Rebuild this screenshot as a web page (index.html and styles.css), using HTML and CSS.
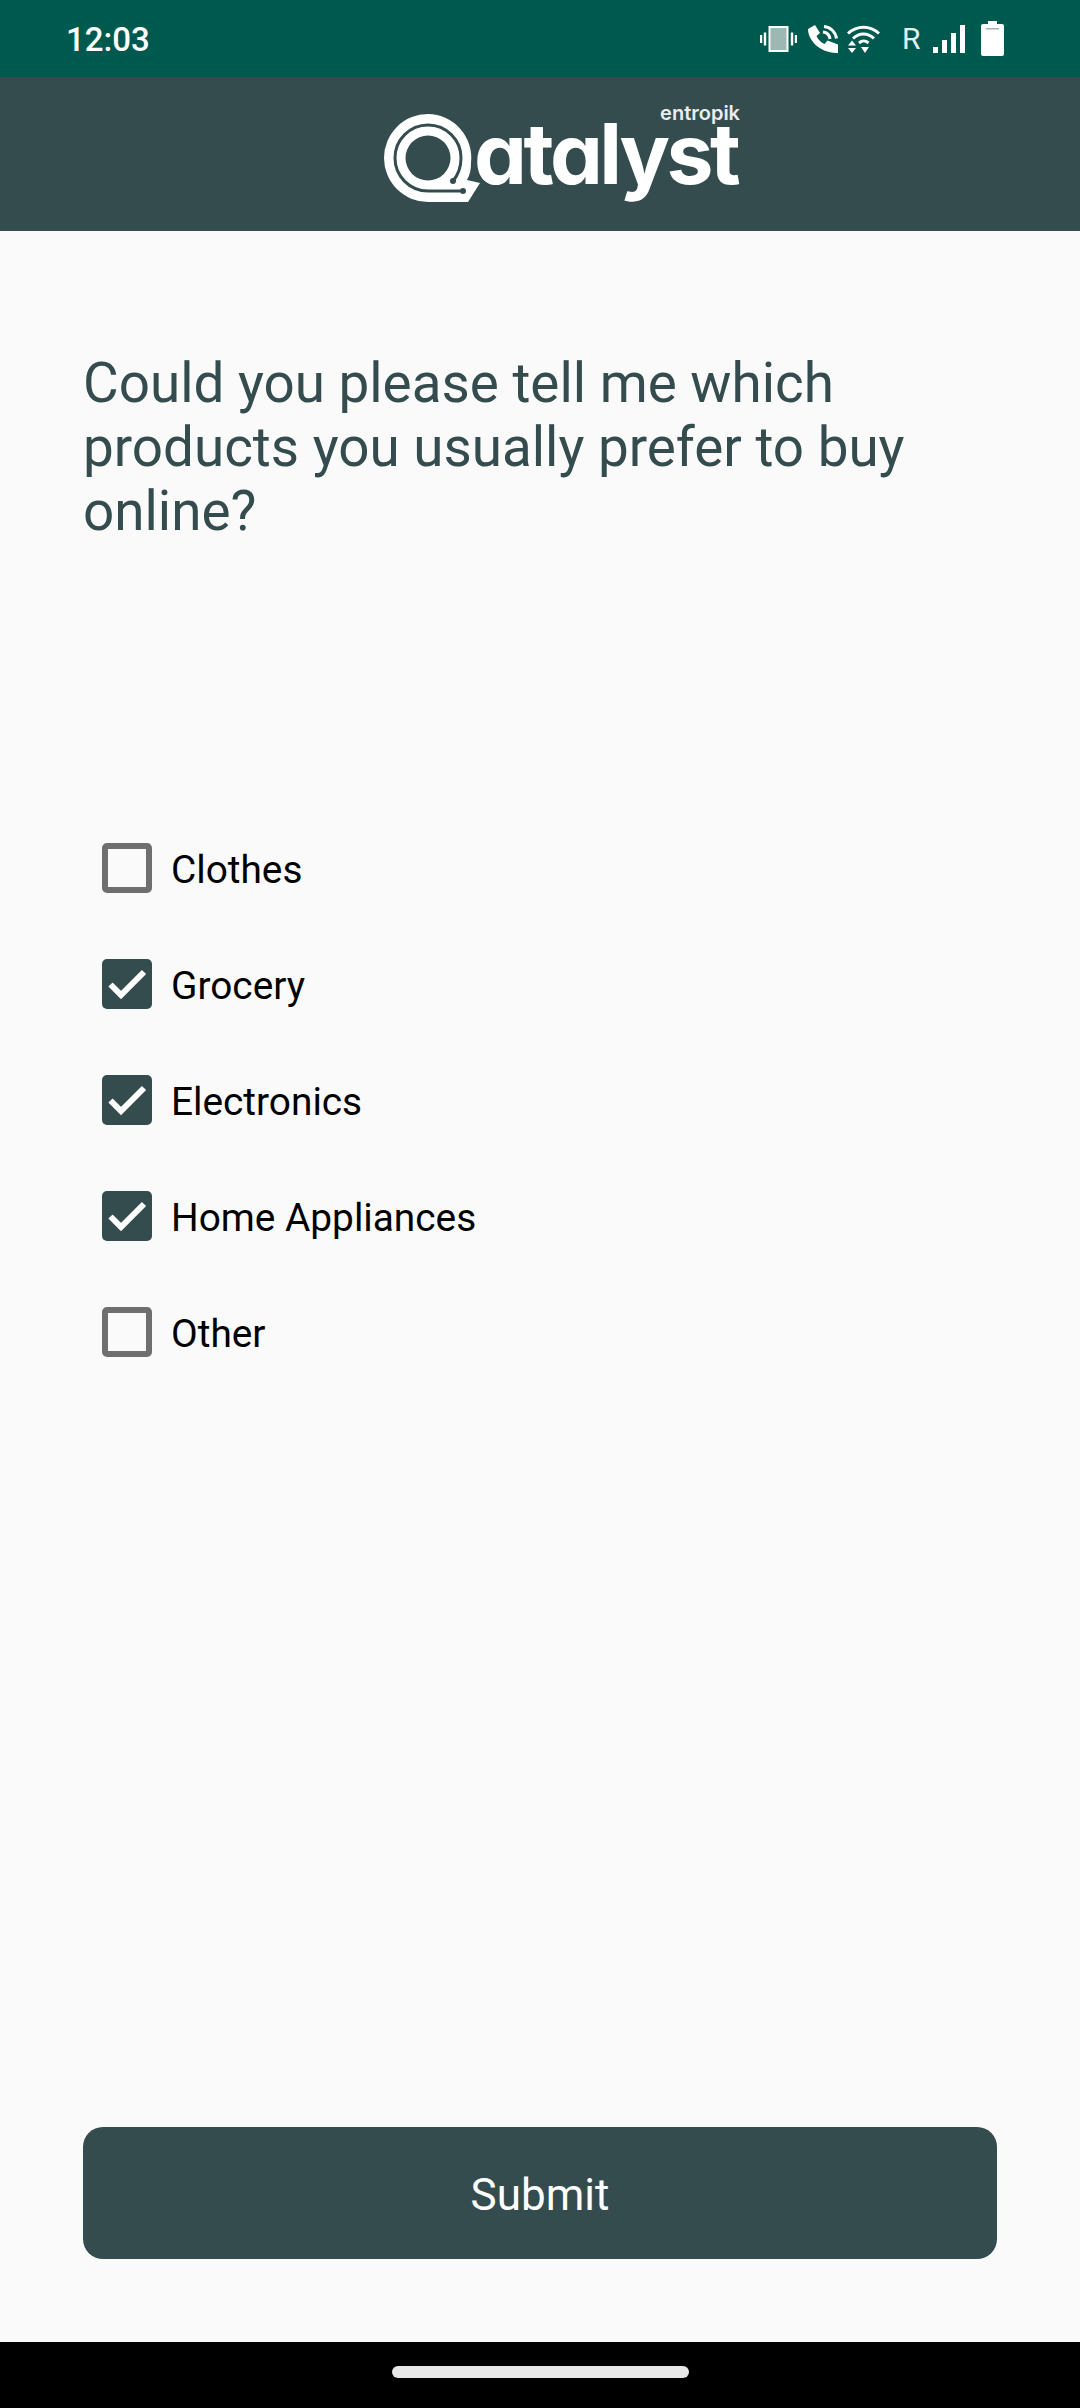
FILE: index.html
```html
<!DOCTYPE html>
<html lang="en">
<head>
<meta charset="utf-8">
<title>Qatalyst survey</title>
<link rel="stylesheet" href="styles.css">
</head>
<body>
<div class="app">
  <div class="status">
    <span class="time">12:03</span>
    <div class="status-icons">
      <svg class="i-vib" viewBox="0 0 37 26"><rect x="9.500" y="1" width="18" height="24" fill="#9db8b2" stroke="#fff" stroke-width="2"/><path d="M1 9v8M5 6.500v13M32 6.500v13M36 9v8" stroke="#fff" stroke-width="2.400" fill="none"/></svg>
      <svg class="i-call" viewBox="0 0 30 28"><path d="M0 4 7 0l5 8-3.500 3c1.500 3.500 4 6 8 8l3-3.500 10.500 4V28C13 28.500 0 16 0 4Z" fill="#fff"/><path d="M15 7c4 .5 6.500 3 7 7M16 1.500c6.500.5 11.500 5.500 12.500 12" stroke="#fff" stroke-width="3" fill="none"/></svg>
      <svg class="i-wifi" viewBox="0 0 33 30"><path d="M1 9.500C10 1 23 1 32 9.500M6 14.500c6.500-6 14.500-6 21 0M12 19c3.500-3 6-3 9.500 0" stroke="#fff" stroke-width="3" fill="none"/><path d="M14 23h8l-4 6ZM1 21.500l4-5 4 5ZM1 24h8l-4 5Z" fill="#fff"/></svg>
      <span class="roam">R</span>
      <svg class="i-sig" viewBox="0 0 32 28"><path d="M0 22h5v6H0ZM9 15h5v13H9ZM18 8h5v20h-5ZM27 0h5v28h-5Z" fill="#fff"/></svg>
      <svg class="i-bat" viewBox="0 0 23 35"><path d="M7 0h9v3h5a2 2 0 0 1 2 2v28a2 2 0 0 1-2 2H2a2 2 0 0 1-2-2V5a2 2 0 0 1 2-2h5Z" fill="#fff"/><rect x="5" y="7" width="13" height="1.500" fill="#9db8b2"/></svg>
    </div>
  </div>
  <header class="brand">
    <div class="logo">
      <svg class="logo-q" viewBox="0 0 98 90">
        <path d="M45 1A44 44 0 0 1 88 50C88 56 87 62 84 67L97 70 85 89H45A44 44 0 0 1 45 1Z" fill="#fff"/>
        <path d="M80 78H45A33 33 0 1 1 78 45C78 55 75 62 70 68" fill="none" stroke="#344c4e" stroke-width="3"/>
        <circle cx="45" cy="45" r="22.500" fill="#344c4e"/>
        <circle cx="80" cy="78" r="3" fill="#344c4e"/>
        <circle cx="70" cy="68" r="3" fill="#344c4e"/>
      </svg>
      <span class="logo-word">atalyst</span>
      <span class="logo-sub">entropik</span>
    </div>
  </header>
  <main class="content">
    <h1 class="question">Could you please tell me which products you usually prefer to buy online?</h1>
    <ul class="options">
      <li class="option"><span class="box"></span><span class="label">Clothes</span></li>
      <li class="option"><span class="box on"><svg viewBox="0 0 50 50"><path d="M8.500 25.500 19 36 42 13" fill="none" stroke="#fff" stroke-width="6"/></svg></span><span class="label">Grocery</span></li>
      <li class="option"><span class="box on"><svg viewBox="0 0 50 50"><path d="M8.500 25.500 19 36 42 13" fill="none" stroke="#fff" stroke-width="6"/></svg></span><span class="label">Electronics</span></li>
      <li class="option"><span class="box on"><svg viewBox="0 0 50 50"><path d="M8.500 25.500 19 36 42 13" fill="none" stroke="#fff" stroke-width="6"/></svg></span><span class="label">Home Appliances</span></li>
      <li class="option"><span class="box"></span><span class="label">Other</span></li>
    </ul>
    <button class="submit">Submit</button>
  </main>
  <div class="navbar"><span class="pill"></span></div>
</div>
</body>
</html>
```
FILE: styles.css
```css
* { box-sizing: border-box; }
html, body { margin: 0; padding: 0; }
body { font-family: Roboto, "Liberation Sans", sans-serif; background: #fafafa; }
.app { width: 1080px; height: 2408px; display: flex; flex-direction: column; overflow: hidden; }

.status { height: 77px; background: #00594e; color: #fff; display: flex; align-items: center; justify-content: space-between; padding: 0 76px 0 66px; }
.time { font-size: 33px; font-weight: 500; line-height: 77px; padding-top: 2px; }
.status-icons { display: flex; align-items: center; }
.status-icons svg { display: block; flex: none; }
.i-vib { width: 37px; height: 26px; margin-right: 11px; }
.i-call { width: 30px; height: 28px; margin-right: 9px; }
.i-wifi { width: 33px; height: 30px; margin-right: 22px; }
.roam { font-size: 30px; line-height: 32px; margin-right: 14px; width: 17px; color: #e6f0ee; }
.i-sig { width: 32px; height: 28px; margin-right: 16px; }
.i-bat { width: 23px; height: 35px; }

.brand { height: 154px; background: #344c4e; display: flex; justify-content: center; align-items: center; }
.logo { position: relative; display: flex; align-items: flex-start; width: 357px; height: 90px; margin: 8px 0 0 43px; }
.logo-q { width: 98px; height: 90px; display: block; flex: none; }
.logo-word { display: block; font-family: Inter, sans-serif; font-feature-settings: "cv11" 1; font-weight: 700; font-size: 84px; line-height: 60px; height: 60px; margin-top: 11px; color: #fff; margin-left: -7px; letter-spacing: -3.500px; white-space: nowrap; }
.logo-sub { position: absolute; right: 0; top: -12px; font-family: Inter, sans-serif; font-weight: 600; font-size: 20px; line-height: 24px; color: #e8eeee; }

.content { flex: 1; display: flex; flex-direction: column; padding: 0 83px 83px; min-height: 0; }
.question { margin: 120px 0 0; font-size: 54.800px; font-weight: 400; line-height: 64px; color: #344c4e; }
.options { list-style: none; padding: 0 0 0 19px; margin: 300px 0 0; display: flex; flex-direction: column; gap: 66px; }
.option { display: flex; align-items: center; height: 50px; font-size: 38.800px; color: #000; }
.label { padding-top: 2px; }
.box { width: 50px; height: 50px; border: 6px solid #6f6f6f; border-radius: 5px; margin-right: 19px; flex: none; }
.box.on { border: 0; background: #344c4e; }
.box svg { display: block; width: 50px; height: 50px; }
.submit { margin-top: auto; height: 132px; width: 100%; border: 0; border-radius: 20px; background: #344c4e; color: #fff; font-family: Roboto, sans-serif; font-size: 44px; padding-top: 4px; }

.navbar { height: 66px; background: #000; display: flex; justify-content: center; align-items: center; padding-bottom: 6px; }
.pill { width: 297px; height: 12px; border-radius: 6px; background: #e8e8e8; }
```
